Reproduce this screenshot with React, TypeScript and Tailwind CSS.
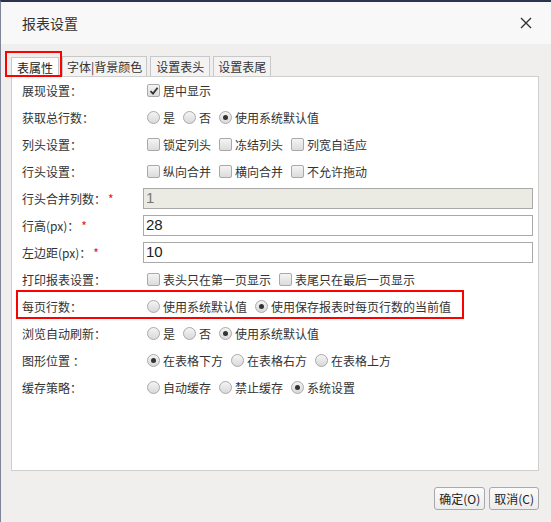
import React from 'react';

const font = { fontFamily: '"Noto Sans CJK SC", "Noto Sans", sans-serif' };

const Radio: React.FC<{ checked?: boolean; label: string }> = ({ checked, label }) => (
  <label className="flex items-center gap-[3px] mr-[8px]">
    <span className="w-[13px] h-[13px] rounded-full border border-[#a9a9a9] bg-gradient-to-b from-[#f4f4f4] to-[#d9d9d9] flex items-center justify-center">
      {checked && <span className="w-[5px] h-[5px] rounded-full bg-[#333]" />}
    </span>
    <span>{label}</span>
  </label>
);

const Check: React.FC<{ checked?: boolean; label: string }> = ({ checked, label }) => (
  <label className="flex items-center gap-[3px] mr-[8px]">
    <span className="w-[13px] h-[13px] rounded-[2px] border border-[#a9a9a9] bg-gradient-to-b from-[#f4f4f4] to-[#dcdcdc] flex items-center justify-center">
      {checked && (
        <svg width="10" height="10" viewBox="0 0 10 10">
          <path d="M1.5 5.2 L4 7.6 L8.6 1.8" fill="none" stroke="#333" strokeWidth="1.8" />
        </svg>
      )}
    </span>
    <span>{label}</span>
  </label>
);

const Row: React.FC<{ label: string; required?: boolean; children: React.ReactNode; marked?: boolean }> = ({
  label,
  required,
  children,
  marked,
}) => (
  <div className="relative flex items-center h-[27px]">
    <div className="w-[135px] pl-[10px] shrink-0">
      {label}
      {required && <span className="text-[#e02020] ml-[2px]">*</span>}
    </div>
    <div className="flex items-center flex-1 pr-[5px]">{children}</div>
    {marked && <div className="absolute left-[4px] top-[-3px] w-[448px] h-[29px] border-2 border-[#ff0000]" />}
  </div>
);

const Input: React.FC<{ value: string; disabled?: boolean }> = ({ value, disabled }) => (
  <div
    className={`flex-1 h-[21px] ml-[-4px] border border-[#a9a9a9] px-[2px] flex items-center text-[15px] text-[#222] ${
      disabled ? 'bg-[#ebebe4] text-[#777]' : 'bg-white'
    }`}
    style={{ fontFamily: '"Liberation Sans", Arial, sans-serif' }}
  >
    {value}
  </div>
);

export default function App() {
  return (
    <div className="w-[551px] h-[522px] bg-[#f0efed] flex flex-col border-t-2 border-t-[#2a3450] border-l border-l-[#7d8596] text-[12px] text-[#333]" style={font}>
      <div className="h-[42px] bg-[#f8f8f8] flex items-center justify-between pl-[21px] pr-[19px]">
        <span className="text-[14px] text-[#333]">报表设置</span>
        <svg width="12" height="12" viewBox="0 0 12 12">
          <path d="M1 1 L11 11 M11 1 L1 11" stroke="#333" strokeWidth="1.4" />
        </svg>
      </div>

      <div className="flex-1 flex flex-col px-[10px] pr-[12px]">
        <div className="relative flex items-end h-[32px] pl-0 gap-[3px] mt-0">
          <div className="relative h-[20px] w-[48px] bg-white border border-[#c8c8c8] border-b-0 flex items-center justify-center z-10 mb-[-1px] text-[#222]">
            表属性
          </div>
          <div className="h-[20px] px-[4px] border border-[#c8c8c8] border-b-0 bg-[#f3f3f3] flex items-center">字体|背景颜色</div>
          <div className="h-[20px] px-[5px] border border-[#c8c8c8] border-b-0 bg-[#f3f3f3] flex items-center">设置表头</div>
          <div className="h-[20px] px-[4px] border border-[#c8c8c8] border-b-0 bg-[#f3f3f3] flex items-center">设置表尾</div>
          <div className="absolute left-[-6px] top-[7px] w-[57px] h-[26px] border-2 border-[#ff0000] z-20" />
        </div>

        <div className="h-[395px] bg-white border border-[#cfcfcf] flex flex-col">
          <Row label="展现设置：">
            <Check checked label="居中显示" />
          </Row>
          <Row label="获取总行数：">
            <Radio label="是" />
            <Radio label="否" />
            <Radio checked label="使用系统默认值" />
          </Row>
          <Row label="列头设置：">
            <Check label="锁定列头" />
            <Check label="冻结列头" />
            <Check label="列宽自适应" />
          </Row>
          <Row label="行头设置：">
            <Check label="纵向合并" />
            <Check label="横向合并" />
            <Check label="不允许拖动" />
          </Row>
          <Row label="行头合并列数：" required>
            <Input value="1" disabled />
          </Row>
          <Row label="行高(px)：" required>
            <Input value="28" />
          </Row>
          <Row label="左边距(px)：" required>
            <Input value="10" />
          </Row>
          <Row label="打印报表设置：">
            <Check label="表头只在第一页显示" />
            <Check label="表尾只在最后一页显示" />
          </Row>
          <Row label="每页行数：" marked>
            <Radio label="使用系统默认值" />
            <Radio checked label="使用保存报表时每页行数的当前值" />
          </Row>
          <Row label="浏览自动刷新：">
            <Radio label="是" />
            <Radio label="否" />
            <Radio checked label="使用系统默认值" />
          </Row>
          <Row label="图形位置 ：">
            <Radio checked label="在表格下方" />
            <Radio label="在表格右方" />
            <Radio label="在表格上方" />
          </Row>
          <Row label="缓存策略：">
            <Radio label="自动缓存" />
            <Radio label="禁止缓存" />
            <Radio checked label="系统设置" />
          </Row>
        </div>

        <div className="flex justify-end gap-[4px] mt-[16px]">
          <button className="h-[23px] px-[4px] border border-[#a9a9a9] rounded-[3px] bg-gradient-to-b from-[#fbfbfb] to-[#ececec] text-[12px] text-[#222]">
            确定(O)
          </button>
          <button className="h-[23px] px-[4px] border border-[#a9a9a9] rounded-[3px] bg-gradient-to-b from-[#fbfbfb] to-[#ececec] text-[12px] text-[#222]">
            取消(C)
          </button>
        </div>
      </div>
    </div>
  );
}
